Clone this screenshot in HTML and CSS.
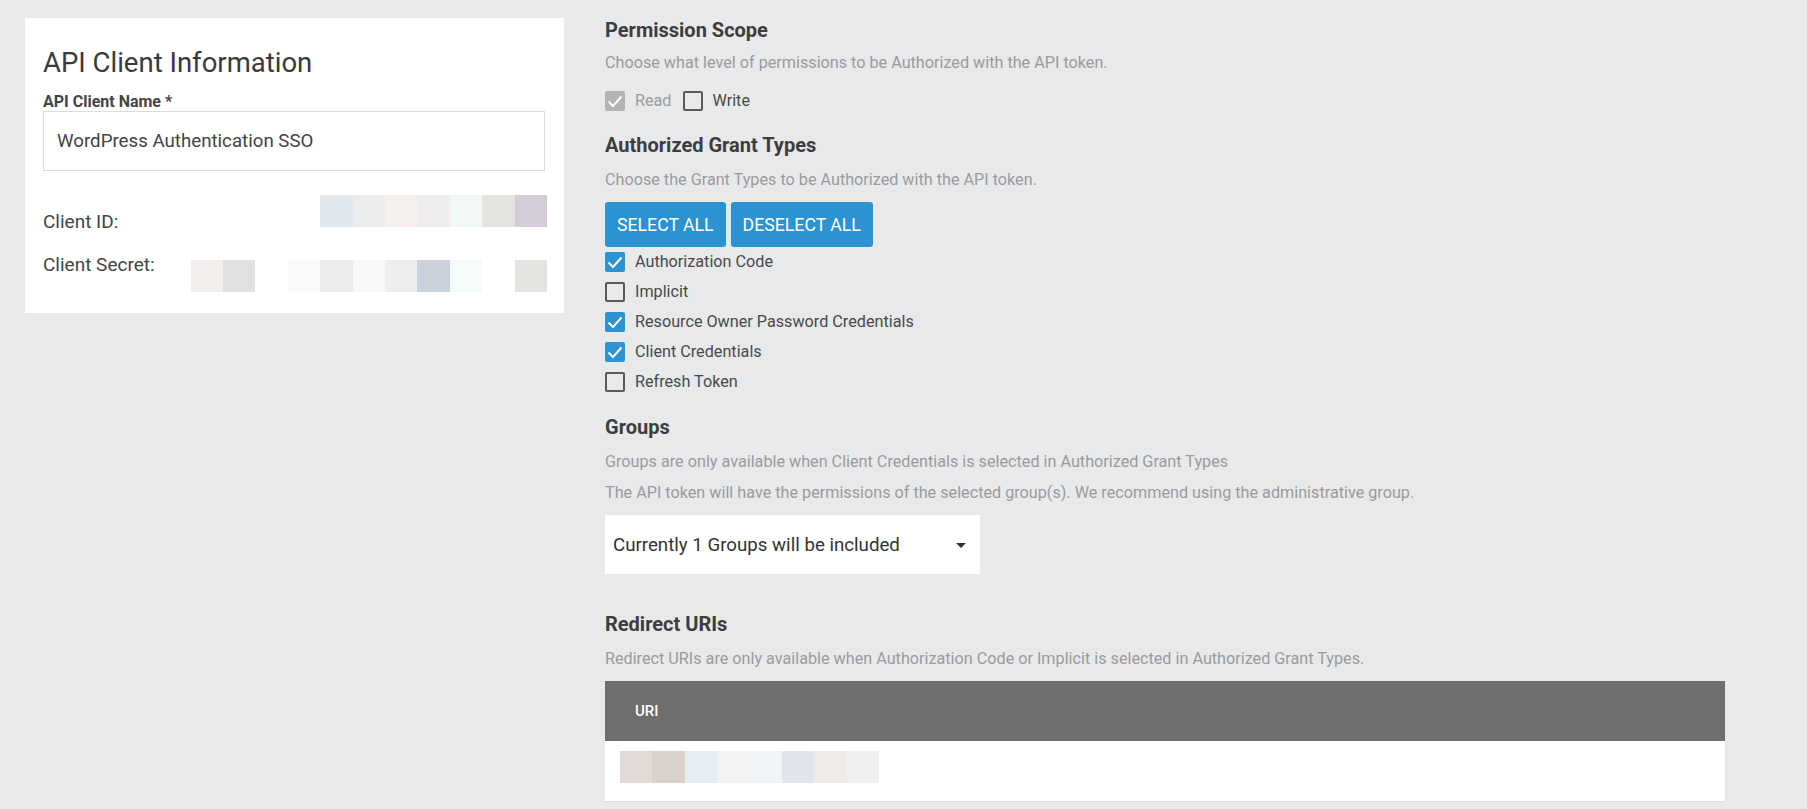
FILE: index.html
```html
<!DOCTYPE html>
<html lang="en">
<head>
<meta charset="utf-8">
<title>API Client</title>
<link rel="stylesheet" href="styles.css">
</head>
<body>
<div class="page">
  <section class="card">
    <h2 class="card-title">API Client Information</h2>
    <label class="field-label">API Client Name *</label>
    <div class="text-input">WordPress Authentication SSO</div>
    <div class="info-row">
      <span class="info-label">Client ID:</span>
      <div class="redacted rid">
        <span></span><span></span><span></span><span></span><span></span><span></span><span></span>
      </div>
    </div>
    <div class="info-row info-row-secret">
      <span class="info-label">Client Secret:</span>
      <div class="redacted rsecret">
        <span></span><span></span><span></span><span></span><span></span><span></span><span></span><span></span><span></span><span></span><span></span>
      </div>
    </div>
  </section>

  <main class="settings">
    <h3 class="sec-title">Permission Scope</h3>
    <p class="sec-desc d1">Choose what level of permissions to be Authorized with the API token.</p>
    <div class="scope-row">
      <span class="cb cb-disabled"><svg viewBox="0 0 20 20"><path d="M3.5 10.5 L8 15 L16.5 5.5" /></svg></span>
      <span class="cb-label muted">Read</span>
      <span class="cb cb-empty scope-gap"></span>
      <span class="cb-label">Write</span>
    </div>

    <h3 class="sec-title t2">Authorized Grant Types</h3>
    <p class="sec-desc d2">Choose the Grant Types to be Authorized with the API token.</p>
    <div class="btn-row">
      <button class="btn">SELECT ALL</button>
      <button class="btn">DESELECT ALL</button>
    </div>
    <ul class="grant-list">
      <li class="grant"><span class="cb cb-checked"><svg viewBox="0 0 20 20"><path d="M3.5 10.5 L8 15 L16.5 5.5" /></svg></span><span class="cb-label">Authorization Code</span></li>
      <li class="grant"><span class="cb cb-empty"></span><span class="cb-label">Implicit</span></li>
      <li class="grant"><span class="cb cb-checked"><svg viewBox="0 0 20 20"><path d="M3.5 10.5 L8 15 L16.5 5.5" /></svg></span><span class="cb-label">Resource Owner Password Credentials</span></li>
      <li class="grant"><span class="cb cb-checked"><svg viewBox="0 0 20 20"><path d="M3.5 10.5 L8 15 L16.5 5.5" /></svg></span><span class="cb-label">Client Credentials</span></li>
      <li class="grant"><span class="cb cb-empty"></span><span class="cb-label">Refresh Token</span></li>
    </ul>

    <h3 class="sec-title t3">Groups</h3>
    <p class="sec-desc d3">Groups are only available when Client Credentials is selected in Authorized Grant Types</p>
    <p class="sec-desc d4">The API token will have the permissions of the selected group(s). We recommend using the administrative group.</p>
    <div class="select">
      <span class="select-text">Currently 1 Groups will be included</span>
      <span class="caret"></span>
    </div>

    <h3 class="sec-title t4">Redirect URIs</h3>
    <p class="sec-desc d5">Redirect URIs are only available when Authorization Code or Implicit is selected in Authorized Grant Types.</p>
    <div class="uri-table">
      <div class="uri-head">URI</div>
      <div class="uri-row">
        <div class="redacted ruri">
          <span></span><span></span><span></span><span></span><span></span><span></span><span></span><span></span>
        </div>
      </div>
    </div>
  </main>
</div>
</body>
</html>
```

FILE: styles.css
```css
html, body {
  margin: 0;
  padding: 0;
  background: #e8e9eb;
}

body {
  font-family: Roboto, "Liberation Sans", Arial, sans-serif;
  color: #444;
}

.page {
  display: flex;
  align-items: flex-start;
  gap: 41px;
  padding: 18px 25px;
}

/* ---------- Left card ---------- */
.card {
  flex: none;
  width: 539px;
  height: 295px;
  box-sizing: border-box;
  background: #fff;
  padding: 29px 17px 0 18px;
}

.card-title {
  margin: 0;
  font-size: 27.5px;
  line-height: 32px;
  font-weight: 400;
  color: #3a3a3a;
}

.field-label {
  display: block;
  margin-top: 14px;
  font-size: 16px;
  line-height: 18px;
  font-weight: 700;
  color: #444;
}

.text-input {
  width: 502px;
  height: 60px;
  box-sizing: border-box;
  border: 1px solid #dcdcdc;
  display: flex;
  align-items: center;
  padding-left: 13px;
  font-size: 18.7px;
  color: #444;
}

.info-row {
  display: flex;
  justify-content: space-between;
  align-items: flex-start;
  margin-top: 24px;
}

.info-row-secret {
  margin-top: 21px;
}

.info-label {
  margin-top: 16px;
  font-size: 19px;
  line-height: 22px;
  color: #444;
}

.info-row-secret .info-label {
  margin-top: 0;
}

.info-row-secret .redacted {
  margin-top: 6px;
}

.redacted {
  display: flex;
}

.redacted span {
  display: block;
  width: 32.4px;
  height: 32px;
}

.rid span:nth-child(1) { background: #dfe7ef; }
.rid span:nth-child(2) { background: #ebecee; }
.rid span:nth-child(3) { background: #f6f1ef; }
.rid span:nth-child(4) { background: #efecee; }
.rid span:nth-child(5) { background: #f1f6f6; }
.rid span:nth-child(6) { background: #e4e3e0; }
.rid span:nth-child(7) { background: #d3ccd6; }

.rsecret span:nth-child(1) { background: #f2efed; }
.rsecret span:nth-child(2) { background: #e2e1df; }
.rsecret span:nth-child(3) { background: #ffffff; }
.rsecret span:nth-child(4) { background: #fbf9fa; }
.rsecret span:nth-child(5) { background: #ebecee; }
.rsecret span:nth-child(6) { background: #faf8f6; }
.rsecret span:nth-child(7) { background: #eeeeee; }
.rsecret span:nth-child(8) { background: #c9d2dc; }
.rsecret span:nth-child(9) { background: #f5fafb; }
.rsecret span:nth-child(10) { background: #ffffff; }
.rsecret span:nth-child(11) { background: #e4e3e0; }

.ruri span:nth-child(1) { background: #e2d9d6; }
.ruri span:nth-child(2) { background: #dad2ca; }
.ruri span:nth-child(3) { background: #e6ecf3; }
.ruri span:nth-child(4) { background: #f4f3f2; }
.ruri span:nth-child(5) { background: #f1f4f7; }
.ruri span:nth-child(6) { background: #e1e4eb; }
.ruri span:nth-child(7) { background: #eeebe8; }
.ruri span:nth-child(8) { background: #f0f0ee; }

/* ---------- Right column ---------- */
.settings {
  flex: none;
  width: 1120px;
}

.sec-title {
  margin: 0;
  font-size: 20px;
  line-height: 24px;
  font-weight: 700;
  color: #3d3d3d;
}

.t2 { margin-top: 22px; }
.t3 { margin-top: 23px; }
.t4 { margin-top: 38px; }

.sec-desc {
  margin: 12px 0 0;
  font-size: 16.2px;
  line-height: 22px;
  color: #9b9b9b;
}

.d1 { margin-top: 10px; }
.d4 { margin-top: 9px; }

.scope-row {
  display: flex;
  align-items: center;
  margin-top: 17px;
  height: 20px;
}

.cb {
  flex: none;
  width: 20px;
  height: 20px;
  box-sizing: border-box;
  border-radius: 2px;
  display: flex;
  align-items: center;
  justify-content: center;
}

.cb svg {
  width: 20px;
  height: 20px;
  display: block;
}

.cb svg path {
  fill: none;
  stroke: #fff;
  stroke-width: 2;
}

.cb-checked {
  background: #2b93d2;
}

.cb-disabled {
  background: #b4b4b4;
}

.cb-empty {
  border: 2px solid #5a5a5a;
}

.cb-label {
  margin-left: 10px;
  font-size: 16.2px;
  line-height: 20px;
  color: #4a4a4a;
}

.cb-label.muted {
  color: #9b9b9b;
}

.scope-gap {
  margin-left: 11px;
}

.btn-row {
  display: flex;
  gap: 5px;
  margin-top: 11px;
}

.btn {
  height: 45px;
  padding: 0 12px;
  border: none;
  border-radius: 3px;
  background: #2b93d2;
  color: #fff;
  font-family: Roboto, "Liberation Sans", Arial, sans-serif;
  font-size: 17.7px;
  font-weight: 400;
}

.grant-list {
  list-style: none;
  margin: 5px 0 0;
  padding: 0;
  display: flex;
  flex-direction: column;
  gap: 10px;
}

.grant {
  display: flex;
  align-items: center;
  height: 20px;
}

.select {
  margin-top: 11px;
  width: 375px;
  height: 59px;
  background: #fff;
  display: flex;
  align-items: center;
  justify-content: space-between;
  padding: 0 14px 0 8px;
  box-sizing: border-box;
}

.select-text {
  font-size: 18.7px;
  color: #333;
}

.caret {
  width: 0;
  height: 0;
  border-left: 5px solid transparent;
  border-right: 5px solid transparent;
  border-top: 5px solid #333;
  margin-top: 2px;
}

.uri-table {
  margin-top: 11px;
  background: #fff;
  border-bottom: 1px solid #dcdcdc;
}

.uri-head {
  height: 60px;
  background: #6e6e6e;
  color: #fff;
  font-size: 15px;
  font-weight: 500;
  display: flex;
  align-items: center;
  padding-left: 30px;
}

.uri-row {
  height: 60px;
  box-sizing: border-box;
  padding: 10px 15px 0;
}
```
